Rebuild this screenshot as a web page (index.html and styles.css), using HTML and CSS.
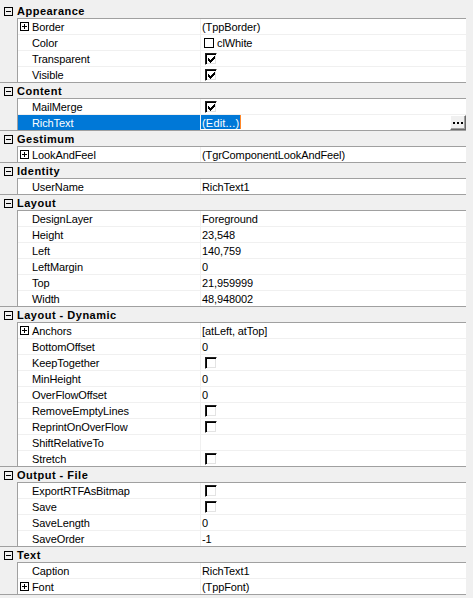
FILE: index.html
```html
<!DOCTYPE html>
<html>
<head>
<meta charset="utf-8">
<link rel="stylesheet" href="styles.css">
</head>
<body>
<div class="grid">

  <section class="cat">
    <div class="cat-head"><svg class="tog" width="9" height="9" viewBox="0 0 9 9"><rect x="0.5" y="0.5" width="8" height="8" fill="none" stroke="#000"/><path d="M2 4.5h5" stroke="#000"/></svg><span class="cat-title">Appearance</span></div>
    <div class="rows">
      <div class="row"><div class="name has-tog"><svg class="tog" width="9" height="9" viewBox="0 0 9 9"><rect x="0.5" y="0.5" width="8" height="8" fill="#fff" stroke="#000"/><path d="M2 4.5h5M4.5 2v5" stroke="#000"/></svg>Border</div><div class="val">(TppBorder)</div></div>
      <div class="row"><div class="name">Color</div><div class="val"><span class="swatch"></span>clWhite</div></div>
      <div class="row"><div class="name">Transparent</div><div class="val"><span class="cb"><svg width="7" height="7" viewBox="0 0 7 7" shape-rendering="crispEdges"><path d="M0 2h1v3H0zM1 3h1v3H1zM2 4h1v3H2zM3 3h1v3H3zM4 2h1v3H4zM5 1h1v3H5zM6 0h1v3H6z" fill="#000"/></svg></span></div></div>
      <div class="row"><div class="name">Visible</div><div class="val"><span class="cb"><svg width="7" height="7" viewBox="0 0 7 7" shape-rendering="crispEdges"><path d="M0 2h1v3H0zM1 3h1v3H1zM2 4h1v3H2zM3 3h1v3H3zM4 2h1v3H4zM5 1h1v3H5zM6 0h1v3H6z" fill="#000"/></svg></span></div></div>
    </div>
  </section>

  <section class="cat">
    <div class="cat-head"><svg class="tog" width="9" height="9" viewBox="0 0 9 9"><rect x="0.5" y="0.5" width="8" height="8" fill="none" stroke="#000"/><path d="M2 4.5h5" stroke="#000"/></svg><span class="cat-title">Content</span></div>
    <div class="rows">
      <div class="row"><div class="name">MailMerge</div><div class="val"><span class="cb"><svg width="7" height="7" viewBox="0 0 7 7" shape-rendering="crispEdges"><path d="M0 2h1v3H0zM1 3h1v3H1zM2 4h1v3H2zM3 3h1v3H3zM4 2h1v3H4zM5 1h1v3H5zM6 0h1v3H6z" fill="#000"/></svg></span></div></div>
      <div class="row selected"><div class="name">RichText</div><div class="val edit"><span class="sel">(Edit...)</span><span class="caret"></span><span class="ellipsis-btn"><svg width="10" height="2" viewBox="0 0 10 2" shape-rendering="crispEdges"><path d="M0 0h2v2H0zM4 0h2v2H4zM8 0h2v2H8z" fill="#000"/></svg></span></div></div>
    </div>
  </section>

  <section class="cat">
    <div class="cat-head"><svg class="tog" width="9" height="9" viewBox="0 0 9 9"><rect x="0.5" y="0.5" width="8" height="8" fill="none" stroke="#000"/><path d="M2 4.5h5" stroke="#000"/></svg><span class="cat-title">Gestimum</span></div>
    <div class="rows">
      <div class="row"><div class="name has-tog"><svg class="tog" width="9" height="9" viewBox="0 0 9 9"><rect x="0.5" y="0.5" width="8" height="8" fill="#fff" stroke="#000"/><path d="M2 4.5h5M4.5 2v5" stroke="#000"/></svg>LookAndFeel</div><div class="val">(TgrComponentLookAndFeel)</div></div>
    </div>
  </section>

  <section class="cat">
    <div class="cat-head"><svg class="tog" width="9" height="9" viewBox="0 0 9 9"><rect x="0.5" y="0.5" width="8" height="8" fill="none" stroke="#000"/><path d="M2 4.5h5" stroke="#000"/></svg><span class="cat-title">Identity</span></div>
    <div class="rows">
      <div class="row"><div class="name">UserName</div><div class="val">RichText1</div></div>
    </div>
  </section>

  <section class="cat">
    <div class="cat-head"><svg class="tog" width="9" height="9" viewBox="0 0 9 9"><rect x="0.5" y="0.5" width="8" height="8" fill="none" stroke="#000"/><path d="M2 4.5h5" stroke="#000"/></svg><span class="cat-title">Layout</span></div>
    <div class="rows">
      <div class="row"><div class="name">DesignLayer</div><div class="val">Foreground</div></div>
      <div class="row"><div class="name">Height</div><div class="val">23,548</div></div>
      <div class="row"><div class="name">Left</div><div class="val">140,759</div></div>
      <div class="row"><div class="name">LeftMargin</div><div class="val">0</div></div>
      <div class="row"><div class="name">Top</div><div class="val">21,959999</div></div>
      <div class="row"><div class="name">Width</div><div class="val">48,948002</div></div>
    </div>
  </section>

  <section class="cat">
    <div class="cat-head"><svg class="tog" width="9" height="9" viewBox="0 0 9 9"><rect x="0.5" y="0.5" width="8" height="8" fill="none" stroke="#000"/><path d="M2 4.5h5" stroke="#000"/></svg><span class="cat-title">Layout - Dynamic</span></div>
    <div class="rows">
      <div class="row"><div class="name has-tog"><svg class="tog" width="9" height="9" viewBox="0 0 9 9"><rect x="0.5" y="0.5" width="8" height="8" fill="#fff" stroke="#000"/><path d="M2 4.5h5M4.5 2v5" stroke="#000"/></svg>Anchors</div><div class="val">[atLeft, atTop]</div></div>
      <div class="row"><div class="name">BottomOffset</div><div class="val">0</div></div>
      <div class="row"><div class="name">KeepTogether</div><div class="val"><span class="cb"></span></div></div>
      <div class="row"><div class="name">MinHeight</div><div class="val">0</div></div>
      <div class="row"><div class="name">OverFlowOffset</div><div class="val">0</div></div>
      <div class="row"><div class="name">RemoveEmptyLines</div><div class="val"><span class="cb"></span></div></div>
      <div class="row"><div class="name">ReprintOnOverFlow</div><div class="val"><span class="cb"></span></div></div>
      <div class="row"><div class="name">ShiftRelativeTo</div><div class="val"></div></div>
      <div class="row"><div class="name">Stretch</div><div class="val"><span class="cb"></span></div></div>
    </div>
  </section>

  <section class="cat">
    <div class="cat-head"><svg class="tog" width="9" height="9" viewBox="0 0 9 9"><rect x="0.5" y="0.5" width="8" height="8" fill="none" stroke="#000"/><path d="M2 4.5h5" stroke="#000"/></svg><span class="cat-title">Output - File</span></div>
    <div class="rows">
      <div class="row"><div class="name">ExportRTFAsBitmap</div><div class="val"><span class="cb"></span></div></div>
      <div class="row"><div class="name">Save</div><div class="val"><span class="cb"></span></div></div>
      <div class="row"><div class="name">SaveLength</div><div class="val">0</div></div>
      <div class="row"><div class="name">SaveOrder</div><div class="val">-1</div></div>
    </div>
  </section>

  <section class="cat">
    <div class="cat-head"><svg class="tog" width="9" height="9" viewBox="0 0 9 9"><rect x="0.5" y="0.5" width="8" height="8" fill="none" stroke="#000"/><path d="M2 4.5h5" stroke="#000"/></svg><span class="cat-title">Text</span></div>
    <div class="rows">
      <div class="row"><div class="name">Caption</div><div class="val">RichText1</div></div>
      <div class="row"><div class="name has-tog"><svg class="tog" width="9" height="9" viewBox="0 0 9 9"><rect x="0.5" y="0.5" width="8" height="8" fill="#fff" stroke="#000"/><path d="M2 4.5h5M4.5 2v5" stroke="#000"/></svg>Font</div><div class="val">(TppFont)</div></div>
    </div>
  </section>

</div>
</body>
</html>
```

FILE: styles.css
```css
html, body {
  margin: 0;
  padding: 0;
  background: #f0f0f0;
}

body {
  font-family: "Liberation Sans", Arial, sans-serif;
  font-size: 11px;
  letter-spacing: -0.1px;
  color: #000;
  height: 598px;
  overflow: hidden;
}

.grid {
  width: 466px;
  padding-top: 3px;
}

.cat {
  border-bottom: 1px solid #a0a0a0;
}

.cat-head {
  height: 15px;
  box-sizing: border-box;
  padding-top: 2px;
  display: flex;
  align-items: center;
  padding-left: 4px;
  line-height: 13px;
}

.cat-head .tog {
  display: block;
  margin-right: 4px;
}

.cat-title {
  font-weight: bold;
  letter-spacing: 0.5px;
}

.rows {
  margin-left: 17px;
  border-left: 1px solid #a0a0a0;
  border-top: 1px solid #a0a0a0;
  background: #fff;
}

.row {
  display: flex;
  height: 16px;
  box-sizing: border-box;
  border-bottom: 1px solid #f0f0f0;
}

.row:last-child {
  height: 15px;
  border-bottom: none;
}

.name {
  width: 183px;
  box-sizing: border-box;
  border-right: 1px solid #f0f0f0;
  padding-left: 14px;
  padding-top: 2px;
  line-height: 13px;
  display: flex;
  align-items: center;
  white-space: nowrap;
}

.name.has-tog {
  padding-left: 2px;
}

.name .tog {
  display: block;
  margin-right: 3px;
  margin-bottom: 2px;
}

.val {
  flex: 1;
  display: flex;
  align-items: center;
  padding-left: 1px;
  padding-top: 2px;
  line-height: 13px;
  white-space: nowrap;
}

.swatch {
  width: 10px;
  height: 10px;
  box-sizing: border-box;
  border: 1px solid #000;
  background: #fff;
  margin-left: 2px;
  margin-right: 3px;
  margin-bottom: 1px;
}

.cb {
  width: 12px;
  height: 12px;
  box-sizing: border-box;
  margin-left: 3px;
  margin-bottom: 1px;
  background: #fff;
  border-top: 1px solid #202020;
  border-left: 1px solid #202020;
  border-right: 1px solid #fff;
  border-bottom: 1px solid #fff;
  box-shadow: inset 1px 1px 0 #000, inset -1px -1px 0 #e3e3e3;
}

.cb svg {
  display: block;
  margin: 2px 0 0 2px;
}

.selected .name {
  background: #0078d7;
  color: #fff;
}

.val.edit {
  padding-left: 0;
  padding-top: 0;
  align-items: flex-start;
}

.sel {
  background: #0078d7;
  color: #fff;
  padding-left: 1px;
  padding-right: 1px;
  padding-top: 2px;
  height: 14px;
  box-sizing: border-box;
  line-height: 12px;
  letter-spacing: 0.2px;
}

.caret {
  width: 1px;
  height: 14px;
  background: #ff8728;
}

.ellipsis-btn {
  margin-left: auto;
  width: 16px;
  height: 15px;
  box-sizing: border-box;
  background: #f0f0f0;
  border-top: 1px solid #fff;
  border-left: 1px solid #fff;
  border-right: 1px solid #696969;
  border-bottom: 1px solid #696969;
  box-shadow: inset -1px -1px 0 #a0a0a0;
  display: flex;
  align-items: center;
  justify-content: center;
  padding-top: 1px;
}

.ellipsis-btn svg {
  display: block;
}
```
